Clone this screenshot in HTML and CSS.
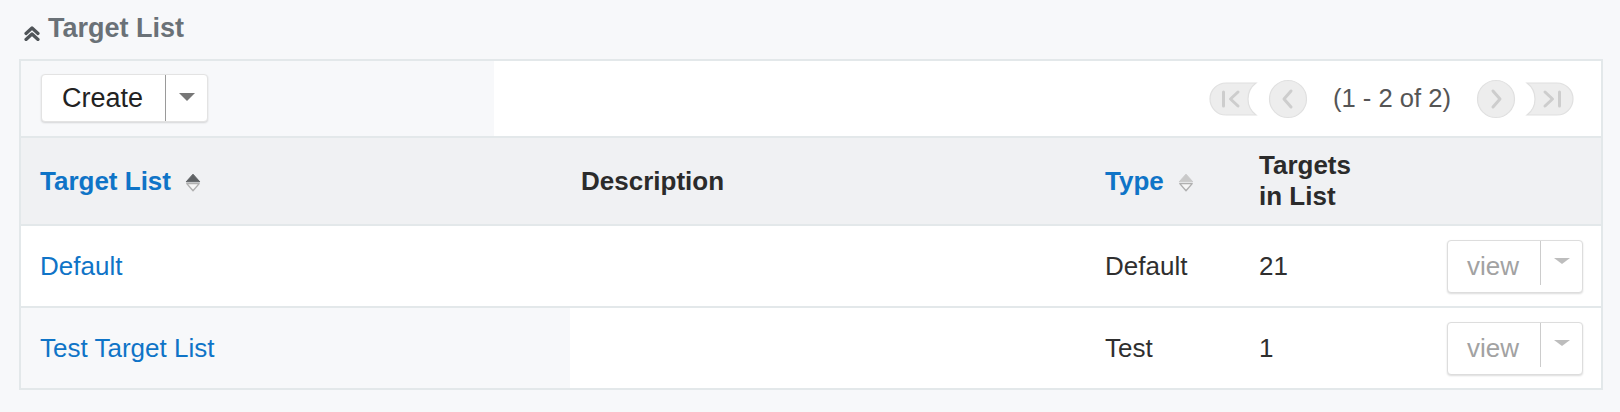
FILE: index.html
```html
<!DOCTYPE html>
<html lang="en">
<head>
<meta charset="utf-8">
<title>Target List</title>
<link rel="stylesheet" href="styles.css">
</head>
<body>
<div class="page">
  <div class="section-title">
    <svg class="collapse-icon" viewBox="0 0 16 15" width="16" height="15" aria-hidden="true">
      <path d="M2 7.5 L8 2 L14 7.5" />
      <path d="M2 13.5 L8 8 L14 13.5" />
    </svg>
    <span>Target List</span>
  </div>

  <div class="panel">
    <div class="toolbar">
      <div class="toolbar-left">
        <div class="split-btn create-btn">
          <span class="btn-label">Create</span>
          <span class="btn-divider"></span>
          <span class="btn-toggle"><span class="caret"></span></span>
        </div>
      </div>
      <div class="toolbar-right">
        <svg class="pager-end" viewBox="0 0 50 34" width="50" height="34" aria-hidden="true">
          <path class="pager-shape" d="M17 1 H47 A20 20 0 0 0 47 33 H17 A16 16 0 0 1 17 1 Z" />
          <path class="pager-glyph" d="M14.5 10 V24 M29 10 L21.5 17 L29 24" />
        </svg>
        <svg class="pager-step" viewBox="0 0 40 40" width="40" height="40" aria-hidden="true">
          <circle class="pager-shape" cx="20" cy="20" r="18.5" />
          <path class="pager-glyph" d="M23 12 L16 20 L23 28" />
        </svg>
        <span class="pager-text">(1 - 2 of 2)</span>
        <svg class="pager-step" viewBox="0 0 40 40" width="40" height="40" aria-hidden="true">
          <circle class="pager-shape" cx="20" cy="20" r="18.5" />
          <path class="pager-glyph" d="M17 12 L24 20 L17 28" />
        </svg>
        <svg class="pager-end" viewBox="0 0 50 34" width="50" height="34" aria-hidden="true">
          <path class="pager-shape" d="M3 1 H33 A16 16 0 0 1 33 33 H3 A20 20 0 0 0 3 1 Z" />
          <path class="pager-glyph" d="M21 10 L28.5 17 L21 24 M35.5 10 V24" />
        </svg>
      </div>
    </div>

    <div class="row head">
      <div class="cell first"><a class="link strong" href="#">Target List</a>
        <svg class="sort-icon" viewBox="0 0 16 19" width="16" height="19" aria-hidden="true">
          <path class="sort-up active" d="M1.2 8.8 L8 1.2 L14.8 8.8 Z" />
          <path class="sort-down" d="M1.8 10.6 L14.2 10.6 L8 17.8 Z" />
        </svg>
      </div>
      <div class="cell strong">Description</div>
      <div class="cell"><a class="link strong" href="#">Type</a>
        <svg class="sort-icon" viewBox="0 0 16 19" width="16" height="19" aria-hidden="true">
          <path class="sort-up" d="M1.2 8.8 L8 1.2 L14.8 8.8 Z" />
          <path class="sort-down" d="M1.8 10.6 L14.2 10.6 L8 17.8 Z" />
        </svg>
      </div>
      <div class="cell strong two-line">Targets<br>in List</div>
      <div class="cell actions"></div>
    </div>

    <div class="row">
      <div class="cell first"><a class="link" href="#">Default</a></div>
      <div class="cell"></div>
      <div class="cell">Default</div>
      <div class="cell">21</div>
      <div class="cell actions">
        <div class="split-btn view-btn">
          <span class="btn-label">view</span>
          <span class="btn-divider"></span>
          <span class="btn-toggle"><span class="caret"></span></span>
        </div>
      </div>
    </div>

    <div class="row alt last">
      <div class="cell first"><a class="link" href="#">Test Target List</a></div>
      <div class="cell"></div>
      <div class="cell">Test</div>
      <div class="cell">1</div>
      <div class="cell actions">
        <div class="split-btn view-btn">
          <span class="btn-label">view</span>
          <span class="btn-divider"></span>
          <span class="btn-toggle"><span class="caret"></span></span>
        </div>
      </div>
    </div>
  </div>
</div>
</body>
</html>
```

FILE: styles.css
```css
* {
  box-sizing: border-box;
}

html,
body {
  margin: 0;
  padding: 0;
  background: #f7f8fa;
}

body {
  font-family: "Liberation Sans", Arial, Helvetica, sans-serif;
  color: #2b2b2b;
}

.page {
  padding: 0 17px 0 19px;
}

/* ---------- section heading ---------- */
.section-title {
  height: 59px;
  padding: 13px 0 0 5px;
  display: flex;
  align-items: flex-start;
  font-size: 27px;
  line-height: 30px;
  font-weight: bold;
  color: #6a7177;
}

.collapse-icon {
  margin: 13px 8px 0 0;
  fill: none;
  stroke: #4f5458;
  stroke-width: 3.2;
  stroke-linecap: round;
  stroke-linejoin: round;
}

/* ---------- panel ---------- */
.panel {
  border: 2px solid #e3e8ea;
  background: #ffffff;
}

.toolbar {
  display: flex;
  height: 77px;
  border-bottom: 2px solid #e3e8ea;
}

.toolbar-left {
  width: 473px;
  background: #f7f8fa;
  padding-left: 20px;
  display: flex;
  align-items: center;
  padding-bottom: 1px;
}

.toolbar-right {
  flex: 1;
  background: #ffffff;
  display: flex;
  align-items: center;
  justify-content: flex-end;
  padding-right: 27px;
}

/* ---------- split buttons ---------- */
.split-btn {
  display: flex;
  align-items: stretch;
  background: #ffffff;
  border: 1px solid #e3e3e3;
  border-radius: 4px;
  box-shadow: 0 1px 2px rgba(0, 0, 0, 0.14);
}

.btn-label {
  display: flex;
  align-items: center;
}

.btn-divider {
  width: 1px;
}

.btn-toggle {
  display: flex;
  justify-content: center;
}

.caret {
  width: 0;
  height: 0;
  border-left: 8.5px solid transparent;
  border-right: 8.5px solid transparent;
}

.create-btn {
  height: 48px;
}

.create-btn .btn-label {
  width: 123px;
  padding-left: 20px;
  font-size: 27px;
  color: #222222;
}

.create-btn .btn-divider {
  background: #9a9a9a;
}

.create-btn .btn-toggle {
  width: 41px;
  align-items: center;
}

.create-btn .caret {
  border-top: 8px solid #777777;
  margin-bottom: 2px;
}

.view-btn {
  height: 53px;
  border-color: #dddddd;
}

.view-btn .btn-label {
  width: 92px;
  padding-left: 19px;
  font-size: 26px;
  color: #a2a2a2;
}

.view-btn .btn-divider {
  background: #cccccc;
  margin-bottom: 7px;
}

.view-btn .btn-toggle {
  width: 41px;
  align-items: flex-start;
  padding-top: 17px;
}

.view-btn .caret {
  border-left-width: 8px;
  border-right-width: 8px;
  border-top: 6px solid #bdbdbd;
}

/* ---------- pager ---------- */
.pager-shape {
  fill: #ededed;
  stroke: #e0e0e0;
  stroke-width: 1.2;
}

.pager-glyph {
  fill: none;
  stroke: #cdcdcd;
  stroke-width: 3;
  stroke-linecap: round;
  stroke-linejoin: round;
}

.pager-end {
  display: block;
}

.pager-step {
  display: block;
}

.pager-end:first-child {
  margin-right: 9px;
}

.pager-text {
  margin: 0 25px 0 25px;
  font-size: 25.6px;
  color: #555555;
}

.pager-text + .pager-step {
  margin-right: 8px;
}

/* ---------- rows ---------- */
.row {
  display: grid;
  grid-template-columns: 549px 524px 154px 1fr auto;
  align-items: stretch;
  height: 82px;
  border-bottom: 2px solid #e3e8ea;
  font-size: 26px;
  color: #2f2f2f;
}

.row.head {
  height: 88px;
  background: #f0f1f3;
}

.row.last {
  height: 80px;
  border-bottom: none;
}

.cell {
  display: flex;
  align-items: center;
  padding-left: 11px;
}

.cell.first {
  padding-left: 19px;
}

.row.alt .cell.first {
  background: #f7f8fa;
}

.cell.actions {
  justify-content: flex-end;
  padding: 0 18px 0 0;
}

.strong {
  font-weight: bold;
  color: #2b2b2b;
}

.two-line {
  line-height: 31px;
}

.link {
  color: #0f74c7;
  text-decoration: none;
}

.link.strong {
  color: #0f74c7;
}

.sort-icon {
  margin-left: 14px;
  margin-top: 3px;
}

.sort-up {
  fill: #c9c9c9;
  stroke: #c9c9c9;
  stroke-width: 1;
  stroke-linejoin: round;
}

.sort-up.active {
  fill: #5f6265;
  stroke: #5f6265;
}

.sort-down {
  fill: #f6f6f6;
  stroke: #b0b0b0;
  stroke-width: 1.4;
  stroke-linejoin: round;
}
```
